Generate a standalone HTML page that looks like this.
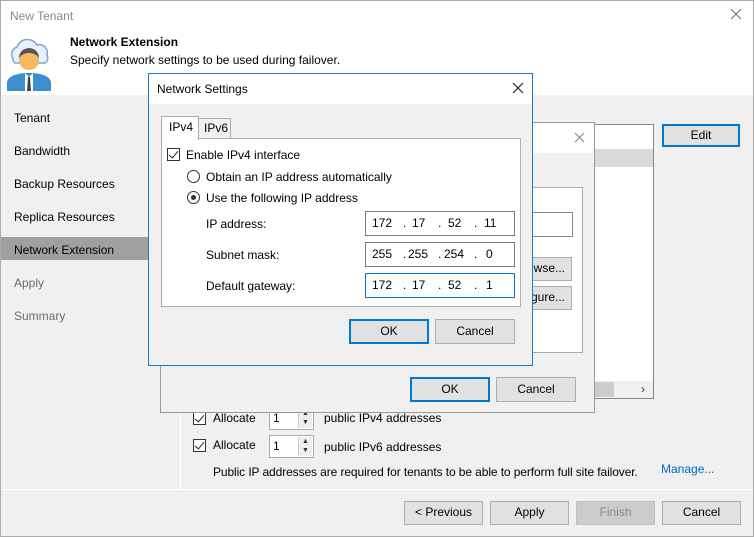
<!DOCTYPE html>
<html><head><meta charset="utf-8"><style>
*{box-sizing:border-box;margin:0;padding:0}
body{width:754px;height:537px;overflow:hidden;background:#f0f0f0;font-family:"Liberation Sans",sans-serif;font-size:12px;color:#000;position:relative}
.a{position:absolute}
.btn{position:absolute;background:#e1e1e1;border:1px solid #adadad;text-align:center;line-height:21px;font-size:12px}
.btn.def{border:2px solid #0078d7;line-height:19px}
.in{position:absolute;background:#fff;border:1px solid #7a7a7a}
.cb{position:absolute;width:13px;height:13px;border:1px solid #333;background:#fff}
.cb:after{content:"";position:absolute;left:3px;top:0px;width:4px;height:8px;border:solid #222;border-width:0 1.5px 1.5px 0;transform:rotate(40deg)}
.rd{position:absolute;width:13px;height:13px;border:1px solid #333;border-radius:50%;background:#fff}
.ip span{position:absolute;top:4px}
</style></head><body>
<div class="a" style="left:0;top:0;width:754px;height:537px;border:1px solid #aaa;"></div>
<div class="a" style="left:1px;top:1px;width:752px;height:94px;background:#fff"></div>
<div class="a" style="left:10px;top:9px;color:#888">New Tenant</div>
<svg class="a" style="left:730px;top:8px" width="12" height="12"><path d="M1 1L11 11M11 1L1 11" stroke="#777" stroke-width="1.2"/></svg>
<svg class="a" style="left:7px;top:33px" width="44" height="58" viewBox="0 0 44 58">
<path d="M6 26a8 8 0 0 1 4-12a11 11 0 0 1 20-2a8 8 0 0 1 10 10a6 6 0 0 1-2 8H8a5 5 0 0 1-2-4z" fill="#e8f1f9" stroke="#7ba9d3" stroke-width="1.5"/>
<path d="M0 58v-8c0-6 8-10 22-10s22 4 22 10v8z" fill="#3a8fd0"/>
<path d="M18 40l4 4 4-4 0 18h-8z" fill="#fff"/><path d="M21 44h2l1 14h-4z" fill="#444"/>
<circle cx="22" cy="27" r="10" fill="#f4b860"/><path d="M12 25a10 10 0 0 1 20 0c-3-4-7-5-10-5s-7 1-10 5z" fill="#555"/>
</svg>
<div class="a" style="left:70px;top:35px;font-weight:bold">Network Extension</div>
<div class="a" style="left:70px;top:53px">Specify network settings to be used during failover.</div>
<div class="a" style="left:180px;top:95px;width:1px;height:395px;background:#fff"></div>
<div class="a" style="left:1px;top:237px;width:148px;height:23px;background:#a0a0a0"></div>
<div class="a" style="left:14px;top:111px">Tenant</div>
<div class="a" style="left:14px;top:144px">Bandwidth</div>
<div class="a" style="left:14px;top:177px">Backup Resources</div>
<div class="a" style="left:14px;top:210px">Replica Resources</div>
<div class="a" style="left:14px;top:243px">Network Extension</div>
<div class="a" style="left:14px;top:276px;color:#6d6d6d">Apply</div>
<div class="a" style="left:14px;top:309px;color:#6d6d6d">Summary</div>
<!-- allocate top spinner (under dialog) -->
<div class="in" style="left:269px;top:407px;width:45px;height:23px;border-color:#aaa;padding:3px 0 0 3px">1<div class="a" style="left:28px;top:1px;width:14px;height:19px;background:#eee;border-left:1px solid #ccc;font-size:7px;text-align:center;line-height:9px;color:#333">▲<br>▼</div></div>
<!-- right list -->
<div class="a" style="left:593px;top:124px;width:61px;height:275px;background:#fff;border:1px solid #888"></div>
<div class="a" style="left:594px;top:149px;width:59px;height:18px;background:#d9d9d9"></div>
<div class="a" style="left:594px;top:381px;width:59px;height:17px;background:#f0f0f0"></div>
<div class="a" style="left:594px;top:382px;width:20px;height:15px;background:#cdcdcd"></div>
<div class="a" style="left:641px;top:382px;color:#333">›</div>
<div class="btn def" style="left:662px;top:124px;width:78px;height:23px">Edit</div>
<!-- middle dialog -->
<div class="a" style="left:160px;top:122px;width:435px;height:291px;background:#f0f0f0;border:1px solid #999"></div>
<div class="a" style="left:161px;top:123px;width:433px;height:30px;background:#fff"></div>
<svg class="a" style="left:574px;top:132px" width="11" height="11"><path d="M1 1L10 10M10 1L1 10" stroke="#888" stroke-width="1.1"/></svg>
<div class="a" style="left:186px;top:187px;width:397px;height:166px;background:#fff;border:1px solid #aaa"></div>
<div class="in" style="left:520px;top:212px;width:53px;height:25px;border-color:#888"></div>
<div class="btn" style="left:520px;top:257px;width:52px;height:24px;text-align:right;padding-right:6px">wse...</div>
<div class="btn" style="left:520px;top:286px;width:52px;height:24px;text-align:right;padding-right:6px">gure...</div>
<div class="btn def" style="left:410px;top:377px;width:80px;height:25px;line-height:21px">OK</div>
<div class="btn" style="left:496px;top:377px;width:80px;height:25px;line-height:23px">Cancel</div>
<!-- front dialog -->
<div class="a" style="left:148px;top:73px;width:385px;height:293px;background:#f0f0f0;border:1px solid #1979ca"></div>
<div class="a" style="left:149px;top:74px;width:383px;height:30px;background:#fff"></div>
<div class="a" style="left:157px;top:82px">Network Settings</div>
<svg class="a" style="left:512px;top:82px" width="12" height="12"><path d="M1 1L11 11M11 1L1 11" stroke="#222" stroke-width="1.2"/></svg>
<div class="a" style="left:161px;top:138px;width:360px;height:169px;background:#fff;border:1px solid #adadad"></div>
<div class="a" style="left:198px;top:118px;width:33px;height:21px;background:#f0f0f0;border:1px solid #adadad;padding:2px 0 0 5px">IPv6</div>
<div class="a" style="left:161px;top:116px;width:38px;height:24px;background:#fff;border:1px solid #adadad;border-bottom:none;padding:3px 0 0 7px">IPv4</div>
<div class="cb" style="left:167px;top:148px"></div>
<div class="a" style="left:186px;top:148px">Enable IPv4 interface</div>
<div class="rd" style="left:187px;top:170px"></div>
<div class="a" style="left:206px;top:170px">Obtain an IP address automatically</div>
<div class="rd" style="left:187px;top:191px"><div class="a" style="left:3px;top:3px;width:5px;height:5px;border-radius:50%;background:#333"></div></div>
<div class="a" style="left:206px;top:191px">Use the following IP address</div>
<div class="a" style="left:206px;top:217px">IP address:</div>
<div class="a" style="left:206px;top:248px">Subnet mask:</div>
<div class="a" style="left:206px;top:279px">Default gateway:</div>
<div class="in ip" style="left:365px;top:211px;width:150px;height:25px"><span style="left:6px">172</span><span style="left:37px">.</span><span style="left:46px">17</span><span style="left:72px">.</span><span style="left:82px">52</span><span style="left:108px">.</span><span style="left:118px">11</span></div>
<div class="in ip" style="left:365px;top:242px;width:150px;height:25px"><span style="left:6px">255</span><span style="left:37px">.</span><span style="left:42px">255</span><span style="left:72px">.</span><span style="left:78px">254</span><span style="left:108px">.</span><span style="left:120px">0</span></div>
<div class="in ip" style="left:365px;top:273px;width:150px;height:25px;border-color:#0078d7"><span style="left:6px">172</span><span style="left:37px">.</span><span style="left:46px">17</span><span style="left:72px">.</span><span style="left:82px">52</span><span style="left:108px">.</span><span style="left:120px">1</span></div>
<div class="btn def" style="left:349px;top:319px;width:80px;height:25px;line-height:21px">OK</div>
<div class="btn" style="left:435px;top:319px;width:80px;height:25px;line-height:23px">Cancel</div>
<!-- allocate -->
<div class="cb" style="left:193px;top:413px;height:12px;border-top:none"></div>
<div class="a" style="left:213px;top:413px;height:11px;overflow:hidden;line-height:11px">Allocate</div>
<div class="a" style="left:324px;top:413px;height:11px;overflow:hidden;line-height:11px">public IPv4 addresses</div>
<div class="cb" style="left:193px;top:439px"></div>
<div class="a" style="left:213px;top:438px">Allocate</div>
<div class="in" style="left:269px;top:435px;width:45px;height:23px;border-color:#aaa;padding:3px 0 0 3px">1<div class="a" style="left:28px;top:1px;width:14px;height:19px;background:#eee;border-left:1px solid #ccc;font-size:7px;text-align:center;line-height:9px;color:#333">▲<br>▼</div></div>
<div class="a" style="left:324px;top:440px">public IPv6 addresses</div>
<div class="a" style="left:213px;top:465px;letter-spacing:-0.1px">Public IP addresses are required for tenants to be able to perform full site failover.</div>
<div class="a" style="left:661px;top:462px;color:#0066cc">Manage...</div>
<div class="a" style="left:1px;top:489px;width:752px;height:1px;background:#fff"></div>
<div class="btn" style="left:404px;top:501px;width:79px;height:24px">&lt; Previous</div>
<div class="btn" style="left:490px;top:501px;width:79px;height:24px">Apply</div>
<div class="btn" style="left:576px;top:501px;width:79px;height:24px;background:#ccc;border-color:#bfbfbf;color:#8a8a8a">Finish</div>
<div class="btn" style="left:662px;top:501px;width:79px;height:24px">Cancel</div>
</body></html>
